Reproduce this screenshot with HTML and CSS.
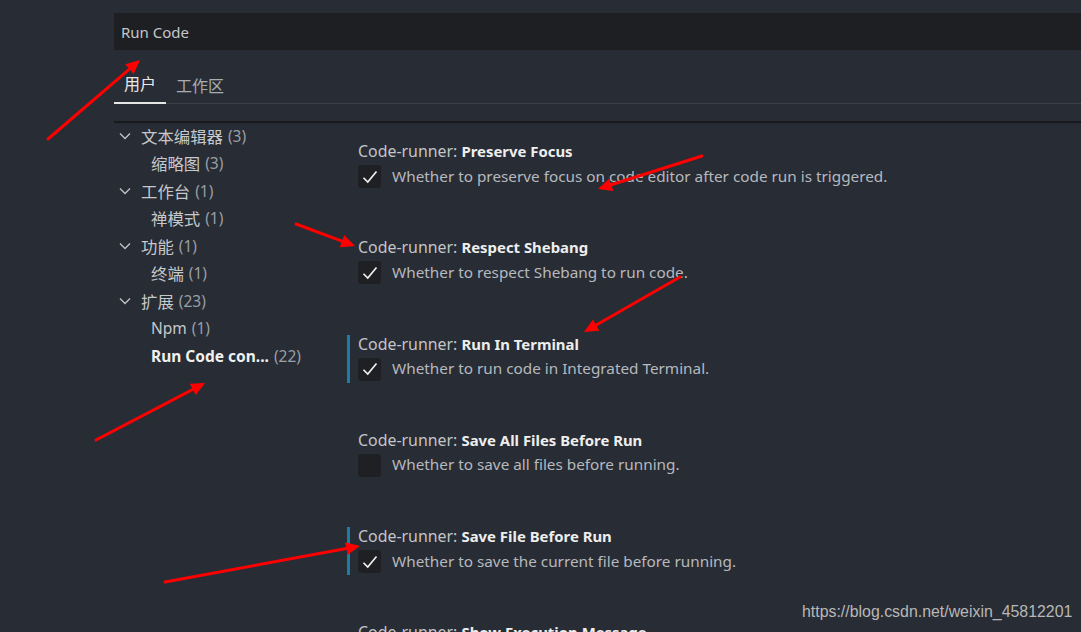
FILE: index.html
```html
<!DOCTYPE html>
<html lang="zh">
<head>
<meta charset="utf-8">
<title>Settings</title>
<link rel="stylesheet" href="styles.css">
</head>
<body>
<div class="editor">
  <header class="header">
    <div class="search">Run Code</div>
    <div class="tabs">
      <div class="tab active">用户</div>
      <div class="tab">工作区</div>
    </div>
  </header>
  <div class="body">
    <nav class="toc">
      <div class="row parent"><svg class="chev" viewBox="0 0 12 12"><path d="M1 3.5 L6 8.5 L11 3.5"/></svg><span class="label cjk">文本编辑器</span><span class="count">(3)</span></div>
      <div class="row child"><span class="label cjk">缩略图</span><span class="count">(3)</span></div>
      <div class="row parent"><svg class="chev" viewBox="0 0 12 12"><path d="M1 3.5 L6 8.5 L11 3.5"/></svg><span class="label cjk">工作台</span><span class="count">(1)</span></div>
      <div class="row child"><span class="label cjk">禅模式</span><span class="count">(1)</span></div>
      <div class="row parent"><svg class="chev" viewBox="0 0 12 12"><path d="M1 3.5 L6 8.5 L11 3.5"/></svg><span class="label cjk">功能</span><span class="count">(1)</span></div>
      <div class="row child"><span class="label cjk">终端</span><span class="count">(1)</span></div>
      <div class="row parent"><svg class="chev" viewBox="0 0 12 12"><path d="M1 3.5 L6 8.5 L11 3.5"/></svg><span class="label cjk">扩展</span><span class="count">(23)</span></div>
      <div class="row child"><span class="label">Npm</span><span class="count">(1)</span></div>
      <div class="row child selected"><span class="label">Run Code con...</span><span class="count">(22)</span></div>
    </nav>
    <main class="list">
      <div class="item">
        <div class="title"><span class="cat">Code-runner: </span><span class="name">Preserve Focus</span></div>
        <div class="value"><span class="cb"><svg viewBox="0 0 16 16"><path d="M2.8 8.6 L6.2 12 L13.2 3.6"/></svg></span><span class="desc">Whether to preserve focus on code editor after code run is triggered.</span></div>
      </div>
      <div class="item">
        <div class="title"><span class="cat">Code-runner: </span><span class="name">Respect Shebang</span></div>
        <div class="value"><span class="cb"><svg viewBox="0 0 16 16"><path d="M2.8 8.6 L6.2 12 L13.2 3.6"/></svg></span><span class="desc">Whether to respect Shebang to run code.</span></div>
      </div>
      <div class="item modified">
        <div class="title"><span class="cat">Code-runner: </span><span class="name">Run In Terminal</span></div>
        <div class="value"><span class="cb"><svg viewBox="0 0 16 16"><path d="M2.8 8.6 L6.2 12 L13.2 3.6"/></svg></span><span class="desc">Whether to run code in Integrated Terminal.</span></div>
      </div>
      <div class="item">
        <div class="title"><span class="cat">Code-runner: </span><span class="name">Save All Files Before Run</span></div>
        <div class="value"><span class="cb"></span><span class="desc">Whether to save all files before running.</span></div>
      </div>
      <div class="item modified">
        <div class="title"><span class="cat">Code-runner: </span><span class="name">Save File Before Run</span></div>
        <div class="value"><span class="cb"><svg viewBox="0 0 16 16"><path d="M2.8 8.6 L6.2 12 L13.2 3.6"/></svg></span><span class="desc">Whether to save the current file before running.</span></div>
      </div>
      <div class="item">
        <div class="title"><span class="cat">Code-runner: </span><span class="name">Show Execution Message</span></div>
        <div class="value"><span class="cb"></span><span class="desc">Whether to show extra execution message.</span></div>
      </div>
    </main>
  </div>
</div>

<svg class="annotations" width="1081" height="632" viewBox="0 0 1081 632">
  <defs>
    <marker id="ah" markerUnits="userSpaceOnUse" markerWidth="16" markerHeight="14" refX="10" refY="6.5" orient="auto">
      <path d="M0 0 L14 6.5 L0 13 Z" fill="#ff0000"/>
    </marker>
  </defs>
  <g stroke="#ff0000" stroke-width="3" stroke-linecap="round" marker-end="url(#ah)">
    <line x1="48" y1="139" x2="137" y2="62.6"/>
    <line x1="702" y1="156" x2="601.8" y2="187.8"/>
    <line x1="296" y1="224" x2="351.3" y2="244.6"/>
    <line x1="680" y1="277" x2="587.5" y2="330"/>
    <line x1="96" y1="440" x2="201.5" y2="384.9"/>
    <line x1="165" y1="582" x2="356" y2="546.7"/>
  </g>
</svg>
<div class="watermark">https://blog.csdn.net/weixin_45812201</div>
</body>
</html>
```

FILE: styles.css
```css
html, body {
  margin: 0;
  padding: 0;
  width: 1081px;
  height: 632px;
  overflow: hidden;
  background: #282c34;
}

body {
  position: relative;
  font-family: "Noto Sans", "Noto Sans CJK SC", sans-serif;
  color: #c8cad0;
}

.editor {
  padding-left: 114px;
  padding-top: 13px;
}

.search {
  height: 37px;
  background: #1e1f22;
  color: #c4c6ca;
  font-size: 15px;
  line-height: 38px;
  padding-left: 7px;
  box-sizing: border-box;
}

.tabs {
  display: flex;
  height: 53px;
  border-bottom: 1px solid #3b3e44;
}

.tab {
  height: 52px;
  padding: 0 10px 6px;
  box-sizing: border-box;
  display: flex;
  align-items: flex-end;
  font-family: "Noto Sans CJK SC", sans-serif;
  font-size: 16px;
  line-height: 22px;
  color: #a9adb3;
}

.tab.active {
  color: #e8e8e8;
  height: 54px;
  border-bottom: 2px solid #e6e6e6;
  padding-bottom: 8px;
}

.body {
  display: flex;
  margin-top: 17px;
  height: 520px;
  overflow: hidden;
  box-shadow: inset 0 3px 1px -1px #17191d;
}

.toc {
  width: 233px;
  flex: none;
  padding-top: 1px;
}

.row {
  height: 27.5px;
  display: flex;
  align-items: center;
  font-size: 15.5px;
  white-space: nowrap;
}

.row .label {
  color: #c6c8cc;
}

.row .label.cjk {
  font-family: "Noto Sans CJK SC", sans-serif;
  font-size: 16.4px;
}

.row .count {
  margin-left: 5px;
  color: #9a9ea5;
}

.row.parent {
  padding-left: 5px;
}

.row.child {
  padding-left: 37px;
}

.row.selected .label {
  font-weight: 700;
  color: #f0f0f0;
}

.chev {
  width: 12px;
  height: 12px;
  margin-right: 10px;
  fill: none;
  stroke: #c0c3c8;
  stroke-width: 1.3;
}

.list {
  flex: 1;
  padding-top: 21px;
  display: flex;
  flex-direction: column;
  gap: 48.25px;
}

.item {
  flex: none;
  height: 48px;
  border-left: 3px solid transparent;
  padding-left: 8px;
  box-sizing: border-box;
}

.item.modified {
  border-left-color: #1b7ea4;
}

.title {
  height: 18px;
  line-height: 18px;
  white-space: nowrap;
}

.title .cat {
  font-size: 15.9px;
  color: #c2c5ca;
}

.title .name {
  font-size: 14.9px;
  font-weight: 700;
  color: #eeeeee;
}

.value {
  margin-top: 5px;
  display: flex;
  align-items: center;
  height: 23px;
}

.cb {
  width: 23px;
  height: 23px;
  border-radius: 3px;
  background: #1e2024;
  flex: none;
  display: flex;
  align-items: center;
  justify-content: center;
}

.cb svg {
  width: 20px;
  height: 20px;
  fill: none;
  stroke: #f4f4f4;
  stroke-width: 1.3;
}

.desc {
  margin-left: 11px;
  font-size: 15.3px;
  line-height: 20px;
  padding-bottom: 2px;
  color: #b6b9be;
  white-space: nowrap;
}

.annotations {
  position: absolute;
  left: 0;
  top: 0;
  pointer-events: none;
}

.watermark {
  position: absolute;
  left: 802px;
  top: 602px;
  font-family: "Liberation Sans", Arial, sans-serif;
  font-size: 15.9px;
  line-height: 20px;
  color: #b8b8b8;
}
```
